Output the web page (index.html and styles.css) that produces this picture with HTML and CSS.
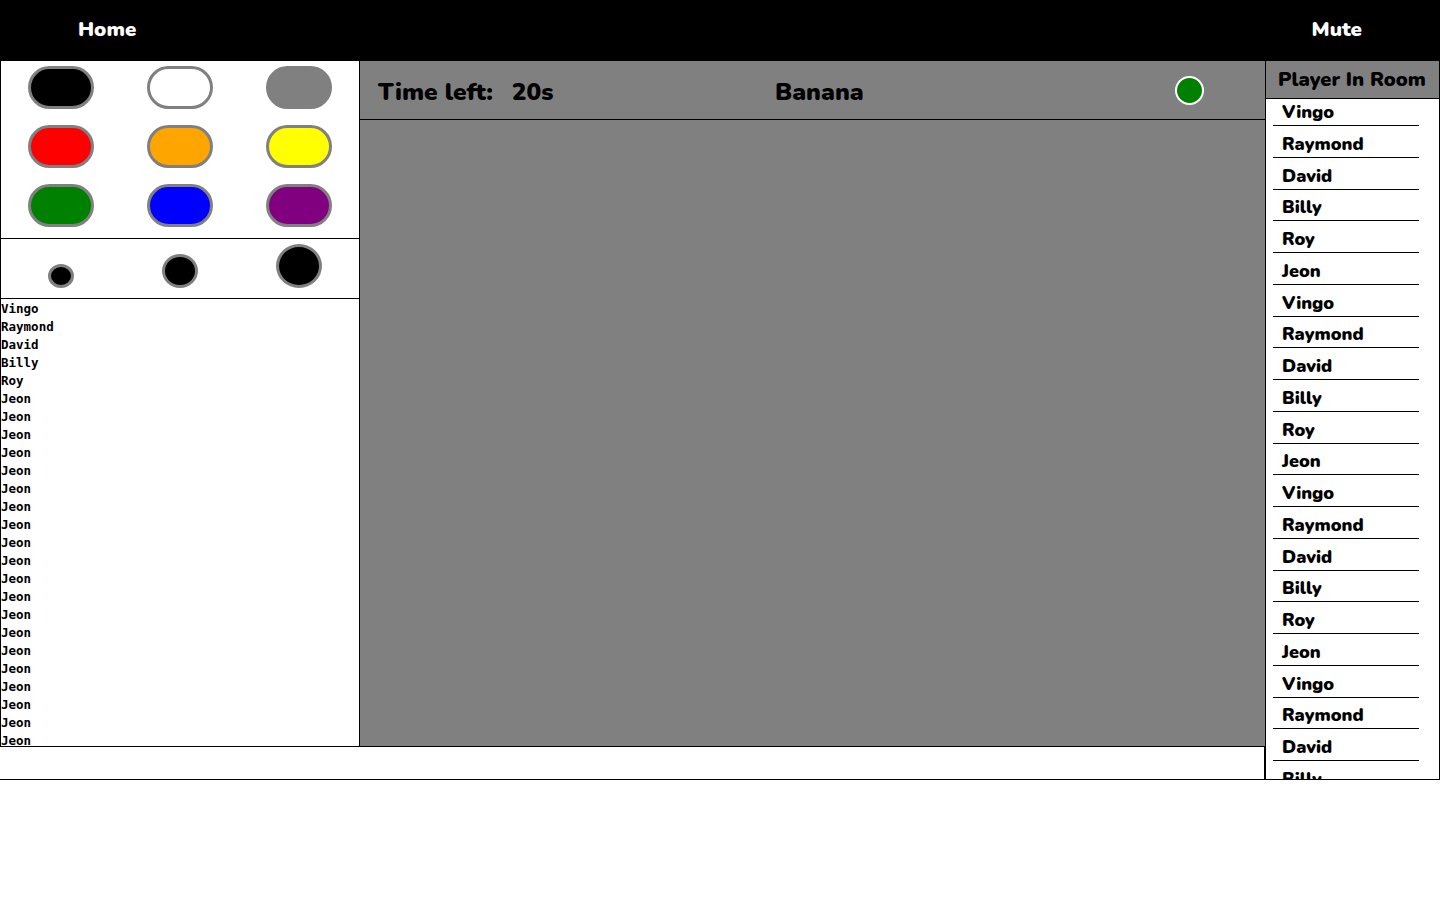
FILE: index.html
```
<!DOCTYPE html>
<html>
<head>
<meta charset="utf-8">
<link rel="stylesheet" href="styles.css">
</head>
<body>
<header class="topbar">
  <span class="nav-link">Home</span>
  <span class="nav-link">Mute</span>
</header>
<main class="app">
  <section class="work">
    <div class="work-row">
      <aside class="tools">
        <div class="palette">
          <button class="swatch c-black"></button>
          <button class="swatch c-white"></button>
          <button class="swatch c-gray"></button>
          <button class="swatch c-red"></button>
          <button class="swatch c-orange"></button>
          <button class="swatch c-yellow"></button>
          <button class="swatch c-green"></button>
          <button class="swatch c-blue"></button>
          <button class="swatch c-purple"></button>
        </div>
        <div class="sizes">
          <div class="size-cell"><span class="dot dot-s"></span></div>
          <div class="size-cell"><span class="dot dot-m"></span></div>
          <div class="size-cell"><span class="dot dot-l"></span></div>
        </div>
        <ul class="chat">
          <li>Vingo</li><li>Raymond</li><li>David</li><li>Billy</li><li>Roy</li>
          <li>Jeon</li><li>Jeon</li><li>Jeon</li><li>Jeon</li><li>Jeon</li>
          <li>Jeon</li><li>Jeon</li><li>Jeon</li><li>Jeon</li><li>Jeon</li>
          <li>Jeon</li><li>Jeon</li><li>Jeon</li><li>Jeon</li><li>Jeon</li>
          <li>Jeon</li><li>Jeon</li><li>Jeon</li><li>Jeon</li><li>Jeon</li>
        </ul>
      </aside>
      <div class="board">
        <div class="board-bar">
          <span class="timer">Time left:<span class="timer-val">20s</span></span>
          <span class="word">Banana</span>
          <span class="status"></span>
        </div>
        <div class="canvas"></div>
      </div>
    </div>
    <div class="chat-input"></div>
  </section>
  <aside class="players">
    <div class="players-head">Player In Room</div>
    <ul class="player-list">
      <li>Vingo</li><li>Raymond</li><li>David</li><li>Billy</li><li>Roy</li><li>Jeon</li>
      <li>Vingo</li><li>Raymond</li><li>David</li><li>Billy</li><li>Roy</li><li>Jeon</li>
      <li>Vingo</li><li>Raymond</li><li>David</li><li>Billy</li><li>Roy</li><li>Jeon</li>
      <li>Vingo</li><li>Raymond</li><li>David</li><li>Billy</li>
    </ul>
  </aside>
</main>
</body>
</html>
```
FILE: styles.css
```
* { box-sizing: border-box; }
html, body { margin: 0; padding: 0; background: #fff; }
body { font-family: "Nunito", "Lato", "Open Sans", sans-serif; }

.topbar {
  height: 60px;
  background: #000;
  display: flex;
  justify-content: space-between;
  align-items: center;
  padding: 0 78px 2px;
}
.nav-link {
  color: #fff;
  font-weight: 900;
  font-size: 20.5px;
}

.app {
  display: flex;
  height: 720px;
}
.work {
  width: 1265px;
  display: flex;
  flex-direction: column;
}
.work-row {
  display: flex;
  height: 687px;
}
.tools {
  width: 360px;
  border: 1px solid #000;
  display: flex;
  flex-direction: column;
}
.palette {
  height: 178px;
  border-bottom: 1px solid #000;
  display: grid;
  grid-template-columns: repeat(3, 1fr);
  grid-auto-rows: 43px;
  row-gap: 16px;
  padding-top: 5px;
  justify-items: center;
}
.swatch {
  width: 66px;
  height: 43px;
  border: 3px solid #808080;
  border-radius: 22px;
  padding: 0;
  margin: 0;
}
.c-black { background: #000; }
.c-white { background: #fff; }
.c-gray { background: #808080; }
.c-red { background: #f00; }
.c-orange { background: #ffa500; }
.c-yellow { background: #ff0; }
.c-green { background: #008000; }
.c-blue { background: #00f; }
.c-purple { background: #800080; }

.sizes {
  height: 60px;
  border-bottom: 1px solid #000;
  display: grid;
  grid-template-columns: repeat(3, 1fr);
  align-items: end;
  justify-items: center;
  padding-bottom: 10px;
}
.size-cell { display: flex; }
.dot {
  display: block;
  background: #000;
  border: 3px solid #808080;
  border-radius: 50%;
}
.dot-s { width: 26px; height: 24px; }
.dot-m { width: 36px; height: 34px; }
.dot-l { width: 46px; height: 44px; }

.chat {
  list-style: none;
  margin: 0;
  padding: 1px 0 0;
  flex: 1;
  overflow: hidden;
  font-family: "DejaVu Sans Mono", monospace;
  font-weight: bold;
  font-size: 12.5px;
  line-height: 18px;
}

.board {
  width: 905px;
  background: #808080;
  border-top: 1px solid #000;
  border-bottom: 1px solid #000;
  display: flex;
  flex-direction: column;
}
.board-bar {
  height: 59px;
  border-bottom: 1px solid #000;
  display: flex;
  align-items: center;
  padding: 3px 0 0 18px;
  font-weight: 900;
  font-size: 24.5px;
  color: #000;
}
.timer { width: 397px; }
.timer-val { margin-left: 19px; }
.word { width: 400px; }
.status {
  width: 29px;
  height: 29px;
  margin-top: -3px;
  border-radius: 50%;
  background: #008000;
  border: 2px solid #fff;
}
.canvas { flex: 1; }

.chat-input {
  height: 33px;
  border-bottom: 1px solid #000;
  border-right: 1px solid #000;
}

.players {
  width: 175px;
  border: 1px solid #000;
  display: flex;
  flex-direction: column;
  overflow: hidden;
}
.players-head {
  height: 38px;
  flex: none;
  background: #808080;
  padding: 1px 0 0 12px;
  font-weight: 900;
  font-size: 20px;
  line-height: 36px;
  border-bottom: 1px solid #000;
}
.player-list {
  list-style: none;
  margin: 0;
  padding: 0 0 0 7px;
  display: flex;
  flex-direction: column;
  gap: 4.75px;
  overflow: hidden;
}
.player-list li {
  flex: none;
  width: 146px;
  height: 27px;
  border-bottom: 1px solid #000;
  padding-left: 9px;
  font-weight: 900;
  font-size: 18px;
  line-height: 26px;
}
```
